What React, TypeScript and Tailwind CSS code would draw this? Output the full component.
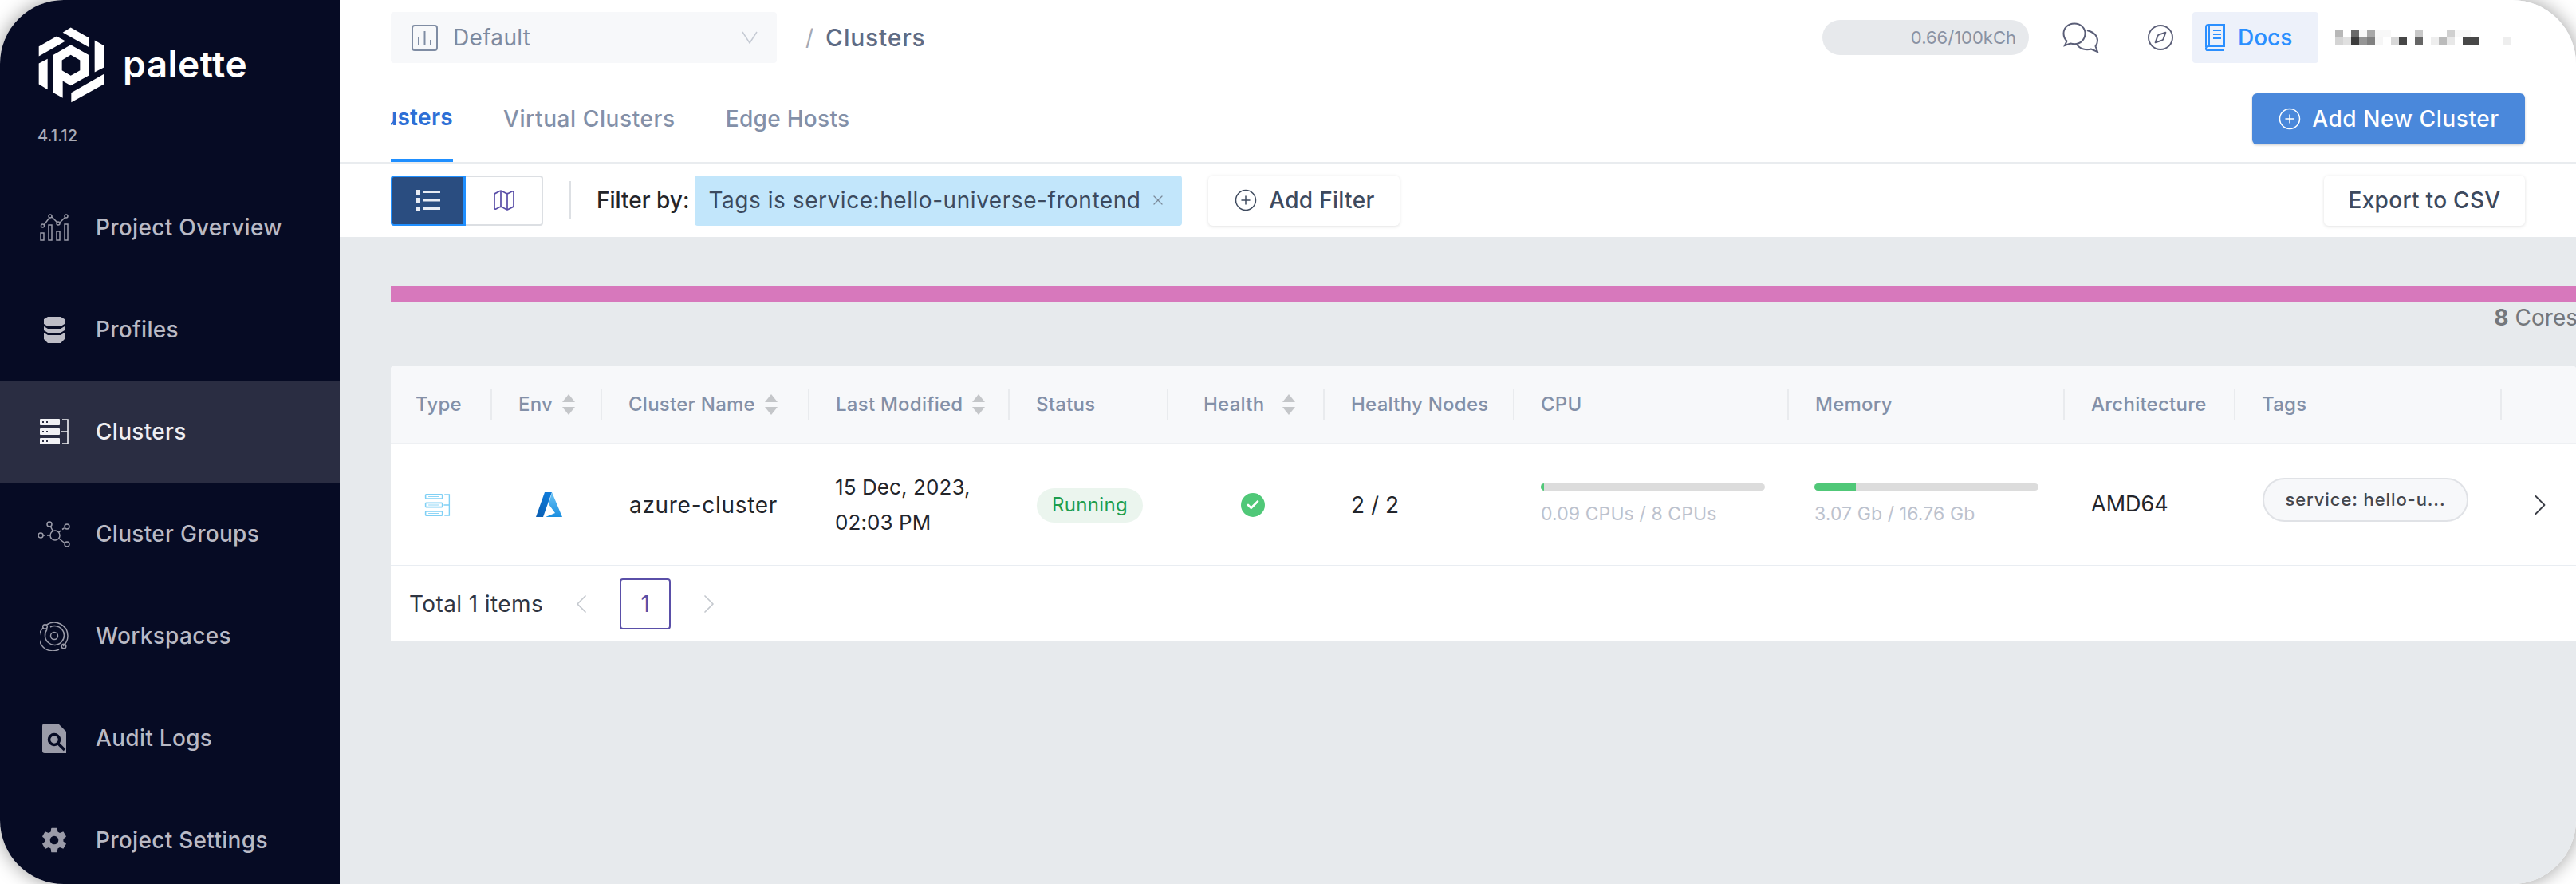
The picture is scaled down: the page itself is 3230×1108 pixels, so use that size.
import React from "react";
import { ChevronLeft, ChevronRight, CirclePlus, Compass, Map as MapIcon, X, Check } from "lucide-react";
import { IoSettingsSharp } from "react-icons/io5";

const Logo = () => (
  <svg viewBox="80 43 255 290" className="w-[85px] h-[97px] shrink-0" fill="#fff">
    <polygon points="175,66 205,47 275,87 275,122" />
    <polygon points="85,118 152,80 185,98 85,155" />
    <polygon points="85,182 118,165 118,280 85,260" />
    <path fillRule="evenodd" d="M205 112 L272 150 L272 228 L205 265 L175 248 L175 312 L140 292 L140 150 Z M205 150 L172 170 L172 208 L205 228 L240 208 L240 170 Z" />
    <polygon points="295,95 330,115 330,197 295,215" />
    <polygon points="207,292 330,222 330,260 207,328" />
  </svg>
);

const OverviewIcon = () => (
  <svg viewBox="0 0 36 34" className="w-[36px] h-[34px]" fill="none" stroke="#9b9ca9" strokeWidth="1.5">
    <path d="M5 14 L12 5 M15 4 L22 11 M25 11 L31 5" />
    <circle cx="3.5" cy="15" r="2" /><circle cx="13" cy="3" r="2" /><circle cx="23" cy="12" r="2" /><circle cx="33" cy="3" r="2" />
    <rect x="1" y="24" width="4" height="9" /><rect x="11" y="14" width="4" height="19" /><rect x="21" y="22" width="4" height="11" /><rect x="31" y="13" width="4" height="20" />
  </svg>
);
const ProfilesIcon = () => (
  <svg viewBox="0 0 26 33" className="w-[26px] h-[33px]" fill="#bdbdc6">
    <path d="M5 0 H21 L26 3 V9 L21 12 H5 L0 9 V3 Z" />
    <path d="M0 12 L5 15 H21 L26 12 V17 L21 20 H5 L0 17 Z" />
    <path d="M0 20 L5 23 H21 L26 20 V28 L21 33 H5 L0 28 Z" />
  </svg>
);
const ClustersIcon = ({ color = "#f2f2f5", thin = false }: { color?: string; thin?: boolean }) => (
  <svg viewBox="0 0 36 32" className={thin ? "w-[33px] h-[28px]" : "w-[36px] h-[32px]"} fill="none">
    {[0, 12, 24].map((y) =>
      thin ? (
        <g key={y}>
          <rect x="1" y={y + 1} width="24" height="6" rx="1" stroke={color} strokeWidth="1.8" />
          <path d={`M5 ${y + 4} H20`} stroke={color} strokeWidth="1" />
        </g>
      ) : (
        <g key={y}>
          <rect x="0" y={y} width="25" height="8" rx="1" fill={color} />
          <rect x="3" y={y + 3} width="2" height="2" fill="#2a2d42" /><rect x="8" y={y + 3} width="2" height="2" fill="#2a2d42" />
        </g>
      )
    )}
    <path d="M28 1 H35 V31 H28 M27 16 H35" stroke={color} strokeWidth="1.6" />
  </svg>
);
const GroupsIcon = () => (
  <svg viewBox="0 0 40 32" className="w-[40px] h-[32px]" fill="none" stroke="#9b9ca9" strokeWidth="1.5">
    <circle cx="21" cy="18" r="6" /><circle cx="14" cy="4" r="3" /><circle cx="36" cy="7" r="3" /><circle cx="3" cy="18" r="3" /><circle cx="36" cy="29" r="3" />
    <path d="M15.5 7 L18.5 13 M6 18 H9 M11 18 H15 M26 14 L28 12 M30 10.5 L32.5 9 M26 22 L33 27.5" />
  </svg>
);
const WorkspacesIcon = () => (
  <svg viewBox="0 0 36 37" className="w-[36px] h-[37px]" fill="none" stroke="#9b9ca9" strokeWidth="1.5">
    <path d="M8 4.5 A17 17 0 0 1 35 18 A17 17 0 0 1 29 31 M24 35 A17 17 0 0 1 4 8" />
    <path d="M9 10 A12 12 0 1 0 27 9 A12 12 0 0 0 13 7" />
    <circle cx="18" cy="18" r="4.5" />
    <circle cx="6.5" cy="6.5" r="2.8" /><circle cx="30" cy="31" r="2.8" />
  </svg>
);
const AuditIcon = () => (
  <svg viewBox="0 0 30 37" className="w-[30px] h-[37px]">
    <path d="M3 0 H20 L30 10 V37 H3 A3 3 0 0 1 0 34 V3 A3 3 0 0 1 3 0 Z" fill="#9a9ba8" />
    <circle cx="15" cy="20" r="6.5" fill="#9a9ba8" stroke="#060b24" strokeWidth="3.5" />
    <path d="M20 25 L28 33" stroke="#060b24" strokeWidth="3.5" />
  </svg>
);
const DefaultIcon = () => (
  <svg viewBox="0 0 33 33" className="w-[33px] h-[33px]" fill="none" stroke="#7f8ca3" strokeWidth="2">
    <rect x="1" y="1" width="31" height="31" rx="3" />
    <path d="M9 25 V16 M16.5 25 V8 M24 25 V19" />
  </svg>
);
const ChatIcon = () => (
  <svg viewBox="0 0 46 38" className="w-[46px] h-[38px]" fill="none" stroke="#5b5f78" strokeWidth="2">
    <path d="M15 1.5 C7 1.5 1.5 7 1.5 14 C1.5 18 3 21 5.5 23.5 L3 29 L10 26.5 C12 27 13.5 27.3 15 27.3 C23 27.3 28.5 21 28.5 14 C28.5 7 23 1.5 15 1.5 Z" />
    <path d="M31 10 C38 12 44 16 44 23 C44 26 43 28 41.5 30 L44 37 L36 33.5 C30 35 22 34 18 27.5" />
  </svg>
);
const BookIcon = () => (
  <svg viewBox="0 0 25 34" className="w-[25px] h-[34px]" fill="none" stroke="#2b8fff" strokeWidth="2">
    <path d="M1 29 V4 A3 3 0 0 1 4 1 H24 V28 H4 A3 3 0 0 0 1 31 A2 2 0 0 0 4 33 H24" />
    <path d="M5 1 V28 M10 8 H20 M10 13 H20 M10 18 H20" />
  </svg>
);
const ListIcon = () => (
  <svg viewBox="0 0 30 28" className="w-[30px] h-[28px]" fill="#e8ecf4">
    <rect x="0" y="1" width="5" height="6" /><rect x="8" y="2" width="22" height="3" />
    <rect x="0" y="11" width="5" height="6" /><rect x="8" y="12.5" width="22" height="3" />
    <rect x="0" y="22" width="5" height="6" /><rect x="8" y="23" width="22" height="3" />
  </svg>
);
const AzureIcon = () => (
  <svg viewBox="0 0 33 33" className="w-[33px] h-[33px]">
    <defs>
      <linearGradient id="az1" x1="0" y1="1" x2="0.6" y2="0"><stop offset="0" stopColor="#0a5cb0" /><stop offset="1" stopColor="#0f7ad8" /></linearGradient>
      <linearGradient id="az2" x1="0.5" y1="0" x2="0.5" y2="1"><stop offset="0" stopColor="#6cc4f5" /><stop offset="1" stopColor="#1b8fe0" /></linearGradient>
    </defs>
    <path d="M11 1 H20 L9 32 H0 Z" fill="url(#az1)" />
    <path d="M20 1 L33 32 H12 L24 27 L16 16 Z" fill="url(#az2)" />
  </svg>
);
const SortArrows = () => (
  <svg viewBox="0 0 16 26" className="w-[16px] h-[26px] shrink-0" fill="#c4c6c9">
    <path d="M8 0 L16 10 H0 Z" /><path d="M0 16 H16 L8 26 Z" />
  </svg>
);

const blurred: [number, number, string][] = [
  [0, 0, "#b8b8b8"], [20, 0, "#6a6a6a"], [30, 0, "#f8f8f8"], [40, 0, "#a8a8a8"], [50, 0, "#f8f8f8"], [60, 0, "#f8f8f8"],
  [100, 0, "#c8c8c8"], [140, 0, "#d0d0d0"], [150, 0, "#f9f9f9"], [160, 0, "#f9f9f9"],
  [0, 10, "#d4d4d4"], [10, 10, "#e0e0e0"], [20, 10, "#3c3c3c"], [30, 10, "#959595"], [40, 10, "#808080"], [50, 10, "#f6f6f6"],
  [70, 10, "#d8d8d8"], [80, 10, "#464646"], [100, 10, "#666666"], [120, 10, "#eeeeee"], [130, 10, "#bbbbbb"], [140, 10, "#e8e8e8"],
  [160, 10, "#484848"], [170, 10, "#484848"], [210, 10, "#eeeeee"],
];
const BlurredName = () => (
  <svg viewBox="0 0 220 20" className="w-[220px] h-[20px]" shapeRendering="crispEdges">
    {blurred.map(([x, y, c]) => <rect key={`${x}-${y}`} x={x} y={y} width="10" height="10" fill={c} />)}
  </svg>
);

const nav = [
  { label: "Project Overview", icon: <OverviewIcon /> },
  { label: "Profiles", icon: <ProfilesIcon /> },
  { label: "Clusters", icon: <ClustersIcon />, active: true },
  { label: "Cluster Groups", icon: <GroupsIcon /> },
  { label: "Workspaces", icon: <WorkspacesIcon /> },
  { label: "Audit Logs", icon: <AuditIcon /> },
  { label: "Project Settings", icon: <IoSettingsSharp className="w-[34px] h-[34px] text-[#9a9ba8]" /> },
];

const columns = [
  { label: "Type" },
  { label: "Env", sort: true },
  { label: "Cluster Name", sort: true },
  { label: "Last Modified", sort: true },
  { label: "Status" },
  { label: "Health", sort: true, wide: true },
  { label: "Healthy Nodes" },
  { label: "CPU" },
  { label: "Memory" },
  { label: "Architecture" },
  { label: "Tags" },
  { label: "" },
];
const gridCols = "grid grid-cols-[127px_138px_260px_251px_199px_196px_238px_344px_346px_214px_334px_93px]";

const Usage = ({ fill, text }: { fill: string; text: string }) => (
  <div className="flex flex-col gap-[14px]">
    <div className="h-[9px] w-[281px] rounded-full bg-[#dcdcdc] overflow-hidden">
      <div className={`h-full bg-[#50c878] ${fill}`} />
    </div>
    <div className="text-[23px] leading-[30px] text-[#bcc2ce] tracking-[0.1px]">{text}</div>
  </div>
);

export default function App() {
  return (
    <div className="w-[3230px] h-[1108px] overflow-hidden bg-white font-['Inter',sans-serif]">
      <div className="flex w-full h-full rounded-[80px] overflow-hidden shadow-[0_0_24px_rgba(0,0,0,0.4)] bg-white">
        <aside className="w-[426px] shrink-0 bg-[#060b24] flex flex-col">
          <div className="h-[221px] shrink-0 flex flex-col pl-[47px] pt-[33px]">
            <div className="flex items-center gap-[22px]">
              <Logo />
              <span className="text-[46px] leading-none font-semibold text-white tracking-[0.5px] -mt-[4px]">palette</span>
            </div>
            <div className="mt-[28px] text-[20px] leading-[24px] font-medium text-[#a9abb7]">4.1.12</div>
          </div>
          {nav.map((n) => (
            <div key={n.label} className={`h-[128px] shrink-0 flex items-center ${n.active ? "bg-[#2a2d42]" : ""}`}>
              <div className="w-[120px] pl-[48px] pr-[32px] flex justify-center shrink-0">{n.icon}</div>
              <span className={`text-[28px] font-medium tracking-[0.3px] ${n.active ? "text-[#eeeef2]" : "text-[#b9bac5]"}`}>{n.label}</span>
            </div>
          ))}
        </aside>

        <main className="flex-1 min-w-0 flex flex-col bg-[#e7eaed]">
          <div className="h-[94px] shrink-0 bg-white flex items-center pl-[64px]">
            <div className="w-[484px] h-[64px] rounded-[4px] bg-[#f7f8fa] flex items-center pl-[26px] pr-[24px]">
              <DefaultIcon />
              <span className="ml-[19px] text-[28px] text-[#7e8a9f] tracking-[0.3px]">Default</span>
              <svg viewBox="0 0 20 16" className="ml-auto w-[20px] h-[16px]" fill="none" stroke="#c5cad3" strokeWidth="1.5"><path d="M1 1 L10 15 L19 1" /></svg>
            </div>
            <span className="ml-[36px] text-[28px] text-[#a3a9b5]">/</span>
            <span className="ml-[15px] text-[30px] font-medium text-[#5f6c85] tracking-[0.8px]">Clusters</span>
            <div className="ml-auto flex items-center mr-[82px]">
              <div className="w-[259px] h-[44px] rounded-full bg-[#e7e9ec] flex items-center justify-end pr-[16px]">
                <span className="text-[22px] text-[#8a92a3]">0.66/100kCh</span>
              </div>
              <div className="ml-[42px]"><ChatIcon /></div>
              <Compass className="ml-[59px] w-[36px] h-[36px] text-[#5b5f78]" strokeWidth={1.3} />
              <div className="ml-[22px] w-[158px] h-[64px] rounded-[4px] bg-[#edf1fa] flex items-center pl-[16px]">
                <BookIcon />
                <span className="ml-[16px] text-[28px] font-medium text-[#2b8fff]">Docs</span>
              </div>
              <div className="ml-[21px]"><BlurredName /></div>
            </div>
          </div>

          <div className="h-[111px] shrink-0 bg-white border-b-2 border-[#e9ecef] flex pl-[64px] pr-[64px]">
            <div className="w-[78px] h-full overflow-hidden border-b-[4px] border-[#1f8fff] flex justify-end items-center">
              <span className="text-[28px] font-semibold text-[#2d6fd6] tracking-[0.3px] whitespace-nowrap">Clusters</span>
            </div>
            <span className="ml-[63px] self-center text-[28px] font-medium text-[#8390a8] tracking-[0.6px]">Virtual Clusters</span>
            <span className="ml-[63px] self-center text-[28px] font-medium text-[#8390a8] tracking-[0.3px]">Edge Hosts</span>
            <div className="ml-auto self-center w-[342px] h-[64px] rounded-[6px] bg-[#4a88db] shadow-[0_1px_3px_rgba(0,0,0,0.2)] flex items-center justify-center gap-[13px] text-white">
              <CirclePlus className="w-[30px] h-[30px]" strokeWidth={1.2} />
              <span className="text-[28px] font-medium tracking-[0.6px]">Add New Cluster</span>
            </div>
          </div>

          <div className="h-[92px] shrink-0 bg-white flex items-center pl-[64px] pr-[64px]">
            <div className="flex h-[63px] w-[191px]">
              <div className="w-[94px] rounded-l-[4px] bg-[#2a4d80] border-2 border-[#1f8fff] border-r-[3px] flex items-center justify-center"><ListIcon /></div>
              <div className="flex-1 rounded-r-[4px] border-2 border-l-0 border-[#dcdfe3] bg-white flex items-center justify-center">
                <MapIcon className="w-[32px] h-[32px] text-[#5a4fa8]" strokeWidth={1.3} />
              </div>
            </div>
            <div className="ml-[33px] w-[2px] h-[48px] bg-[#dde0e4]" />
            <span className="ml-[32px] text-[28px] font-medium text-[#23252b]">Filter by:</span>
            <div className="ml-[7px] h-[63px] w-[611px] rounded-[4px] bg-[#c2e6fb] flex items-center pl-[17px] pr-[20px]">
              <span className="text-[28px] text-[#3c4a5e] tracking-[0.55px] whitespace-nowrap">Tags is service:hello-universe-frontend</span>
              <X className="ml-auto w-[20px] h-[20px] text-[#7b8a99]" strokeWidth={1.5} />
            </div>
            <div className="ml-[33px] w-[240px] h-[63px] rounded-[6px] bg-white shadow-[0_1px_4px_rgba(0,0,0,0.12)] flex items-center justify-center gap-[14px] text-[#3e4a5e]">
              <CirclePlus className="w-[30px] h-[30px]" strokeWidth={1.2} />
              <span className="text-[28px] font-medium tracking-[0.3px]">Add Filter</span>
            </div>
            <div className="ml-auto w-[252px] h-[63px] rounded-[6px] bg-white shadow-[0_1px_4px_rgba(0,0,0,0.12)] flex items-center justify-center">
              <span className="text-[28px] font-medium text-[#3e4a5e] tracking-[0.3px]">Export to CSV</span>
            </div>
          </div>

          <div className="flex-1 pl-[64px] pt-[62px] min-h-0">
            <div className="h-[20px] bg-[#d778bc]" />
            <div className="h-[38px] flex items-center justify-end whitespace-nowrap text-[28px] text-[#74777c] -mr-[2px]">
              <b className="font-bold mr-[8px]">8</b>Cores
            </div>
            <div className="h-[42px]" />
            <div className="rounded-t-[4px] overflow-hidden bg-white">
              <div className={`${gridCols} h-[98px] bg-[#f7f8fa] border-b-2 border-[#eef0f3] items-center`}>
                {columns.map((c, i) => (
                  <div key={i} className={`h-[38px] flex items-center ${c.wide ? "gap-[23px] pl-[44px]" : "gap-[12px]"} ${!c.wide && i === 0 ? "pl-[31px]" : ""} ${!c.wide && i !== 0 ? "pl-[33px]" : ""} ${i < 11 ? "border-r-2 border-[#e9ebee]" : ""}`}>
                    <span className="text-[24px] font-medium text-[#8390a8] tracking-[0.25px] whitespace-nowrap">{c.label}</span>
                    {c.sort && <SortArrows />}
                  </div>
                ))}
              </div>
              <div className={`${gridCols} h-[153px] border-b-2 border-[#e9edf2] items-center text-[28px] text-[#23252b]`}>
                <div className="pl-[42px]"><ClustersIcon color="#7fd0f5" thin /></div>
                <div className="pl-[55px]"><AzureIcon /></div>
                <div className="pl-[34px] tracking-[0.7px]">azure-cluster</div>
                <div className="pl-[32px] text-[26px] leading-[44px] tracking-[0.1px]">15 Dec, 2023,<br />02:03 PM</div>
                <div className="pl-[34px]">
                  <span className="inline-flex h-[43px] w-[133px] items-center justify-center rounded-full bg-[#ebf5ee] text-[24px] text-[#1f9d4d] tracking-[0.3px]">Running</span>
                </div>
                <div className="pl-[91px]">
                  <div className="w-[30px] h-[30px] rounded-full bg-[#50c878] flex items-center justify-center"><Check className="w-[18px] h-[18px] text-white" strokeWidth={3.5} /></div>
                </div>
                <div className="pl-[33px]">2 / 2</div>
                <div className="pl-[33px]"><Usage fill="w-[4px]" text="0.09 CPUs / 8 CPUs" /></div>
                <div className="pl-[32px]"><Usage fill="w-[52px]" text="3.07 Gb / 16.76 Gb" /></div>
                <div className="pl-[33px] text-[27px]">AMD64</div>
                <div className="pl-[34px] -mt-[12px]">
                  <span className="inline-flex h-[55px] w-[258px] items-center justify-center rounded-full border-2 border-[#e0e2e6] bg-[#f7f8fa] text-[22px] font-medium text-[#45474d] tracking-[0.9px]">service: hello-u...</span>
                </div>
                <div className="pl-[26px]"><ChevronRight className="w-[44px] h-[44px] text-[#3c3f48]" strokeWidth={1} /></div>
              </div>
              <div className="h-[94px] flex items-center pl-[23px]">
                <span className="text-[28px] text-[#2f3542] tracking-[0.4px]">Total 1 items</span>
                <ChevronLeft className="ml-[28px] w-[40px] h-[40px] text-[#c4c8ce]" strokeWidth={1} />
                <div className="ml-[28px] w-[64px] h-[64px] rounded-[4px] border-2 border-[#5a4fa8] flex items-center justify-center text-[28px] text-[#5a4fa8]">1</div>
                <ChevronRight className="ml-[28px] w-[40px] h-[40px] text-[#c4c8ce]" strokeWidth={1} />
              </div>
            </div>
          </div>
        </main>
      </div>
    </div>
  );
}
